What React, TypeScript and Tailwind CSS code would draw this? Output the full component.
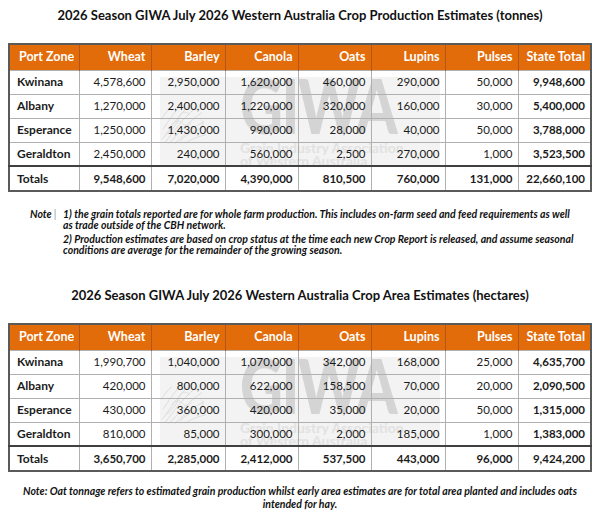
import * as React from "react";

type Row = { zone: string; values: string[]; total: string };

const cols = ["Wheat", "Barley", "Canola", "Oats", "Lupins", "Pulses", "State Total"];

const production: Row[] = [
  { zone: "Kwinana", values: ["4,578,600", "2,950,000", "1,620,000", "460,000", "290,000", "50,000"], total: "9,948,600" },
  { zone: "Albany", values: ["1,270,000", "2,400,000", "1,220,000", "320,000", "160,000", "30,000"], total: "5,400,000" },
  { zone: "Esperance", values: ["1,250,000", "1,430,000", "990,000", "28,000", "40,000", "50,000"], total: "3,788,000" },
  { zone: "Geraldton", values: ["2,450,000", "240,000", "560,000", "2,500", "270,000", "1,000"], total: "3,523,500" },
];
const productionTotals = ["9,548,600", "7,020,000", "4,390,000", "810,500", "760,000", "131,000", "22,660,100"];

const area: Row[] = [
  { zone: "Kwinana", values: ["1,990,700", "1,040,000", "1,070,000", "342,000", "168,000", "25,000"], total: "4,635,700" },
  { zone: "Albany", values: ["420,000", "800,000", "622,000", "158,500", "70,000", "20,000"], total: "2,090,500" },
  { zone: "Esperance", values: ["430,000", "360,000", "420,000", "35,000", "20,000", "50,000"], total: "1,315,000" },
  { zone: "Geraldton", values: ["810,000", "85,000", "300,000", "2,000", "185,000", "1,000"], total: "1,383,000" },
];
const areaTotals = ["3,650,700", "2,285,000", "2,412,000", "537,500", "443,000", "96,000", "9,424,200"];

const widths = ["w-[70px]", "w-[72px]", "w-[74px]", "w-[73px]", "w-[73px]", "w-[74px]", "w-[73px]", "w-[73px]"];

// faint GIWA logo sitting behind the figures
function Watermark() {
  return (
    <div className="pointer-events-none absolute left-[152px] top-[34px] flex h-[90px] w-[280px] bg-[#f3f3f3]">
      <svg width="96" height="90" viewBox="0 0 96 90" fill="none" stroke="#dcdcdc" strokeWidth="2">
        <path d="M4 80 C 20 60, 30 40, 60 10" />
        <path d="M10 86 C 28 64, 40 44, 72 16" />
        <path d="M18 88 C 36 70, 50 50, 84 26" />
        <path d="M6 60 C 16 44, 26 30, 44 8" />
        <path d="M30 88 C 44 74, 60 60, 88 44" />
        <path d="M14 70 C 26 58, 34 50, 38 36 C 42 24, 52 22, 58 30" />
        <path d="M40 84 C 50 70, 66 66, 80 58 C 86 54, 88 48, 84 42" />
        <path d="M24 50 C 30 42, 40 40, 46 48 C 50 54, 58 54, 62 46" />
        <path d="M2 40 C 8 32, 14 22, 24 14" />
        <path d="M50 88 C 60 80, 72 76, 92 70" />
      </svg>
      <div className="ml-[32px] flex flex-col items-start">
        <div className="mt-[-10px] origin-left scale-x-[0.78] text-[76px] font-black leading-none tracking-[-2px] text-[#d4d4d4]">
          GIWA
        </div>
        <div className="mt-[-2px] whitespace-nowrap text-[14px] font-bold leading-[13px] text-[#e2e2e2]">
          Grain Industry Association
        </div>
        <div className="whitespace-nowrap text-[14px] font-bold leading-[14px] text-[#e2e2e2]">
          of Western Australia
        </div>
      </div>
    </div>
  );
}

function CropTable({ rows, totals }: { rows: Row[]; totals: string[] }) {
  return (
    <div className="relative ml-[8px] w-[582px]">
      <Watermark />
      <table className="relative w-[582px] table-fixed border-collapse border-2 border-[#5a5a5a] text-[11.5px] text-[#1b1b1b]">
        <colgroup>
          {widths.map((w, i) => (
            <col key={i} className={w} />
          ))}
        </colgroup>
        <thead>
          <tr className="h-[26px] bg-[#e36c0a] text-[12.5px] font-bold text-white">
            <th className="border-x border-[#b3561a] pl-[9px] text-left">Port Zone</th>
            {cols.map((c) => (
              <th key={c} className="border-x border-[#b3561a] pr-[5px] text-right">
                {c}
              </th>
            ))}
          </tr>
        </thead>
        <tbody>
          {rows.map((r) => (
            <tr key={r.zone} className="h-[24px]">
              <td className="border border-[#b0b0b0] pl-[7px] text-[12px] font-bold">{r.zone}</td>
              {r.values.map((v, i) => (
                <td key={i} className="border border-[#b0b0b0] pr-[5px] text-right">
                  {v}
                </td>
              ))}
              <td className="border border-[#b0b0b0] pr-[5px] text-right font-bold">{r.total}</td>
            </tr>
          ))}
          <tr className="h-[25px] border-t-2 border-[#404040] align-top">
            <td className="border-x border-[#b0b0b0] pl-[7px] pt-[3px] text-[12px] font-bold">Totals</td>
            {totals.map((v, i) => (
              <td key={i} className="border-x border-[#b0b0b0] pr-[5px] pt-[3px] text-right font-bold">
                {v}
              </td>
            ))}
          </tr>
        </tbody>
      </table>
    </div>
  );
}

export default function App() {
  return (
    <div className="h-[519px] w-[600px] overflow-hidden bg-white font-['Lato',sans-serif] text-[#111]">
      <h1 className="pt-[7px] text-center text-[13px] font-bold leading-[16px]">
        2026 Season GIWA July 2026 Western Australia Crop Production Estimates (tonnes)
      </h1>
      <div className="mt-[20px]">
        <CropTable rows={production} totals={productionTotals} />
      </div>

      <div className="mt-[17px] flex text-[10.5px] font-bold italic leading-[11px]">
        <div className="ml-[30px] w-[33px] shrink-0">
          Note<span className="ml-[2px] font-normal not-italic text-[#999]">|</span>
        </div>
        <div className="flex flex-col">
          <p className="whitespace-nowrap">
            1) the grain totals reported are for whole farm production. This includes on-farm seed and feed requirements as well
          </p>
          <p className="whitespace-nowrap">as trade outside of the CBH network.</p>
          <p className="mt-[3px] whitespace-nowrap">
            2) Production estimates are based on crop status at the time each new Crop Report is released, and assume seasonal
          </p>
          <p className="whitespace-nowrap">conditions are average for the remainder of the growing season.</p>
        </div>
      </div>

      <h2 className="mt-[31px] text-center text-[13px] font-bold leading-[16px]">
        2026 Season GIWA July 2026 Western Australia Crop Area Estimates (hectares)
      </h2>
      <div className="mt-[20px]">
        <CropTable rows={area} totals={areaTotals} />
      </div>

      <div className="mt-[13px] flex flex-col items-center text-[10.5px] font-bold italic leading-[13px]">
        <p className="whitespace-nowrap">
          Note: Oat tonnage refers to estimated grain production whilst early area estimates are for total area planted and includes oats
        </p>
        <p className="whitespace-nowrap">intended for hay.</p>
      </div>
    </div>
  );
}
